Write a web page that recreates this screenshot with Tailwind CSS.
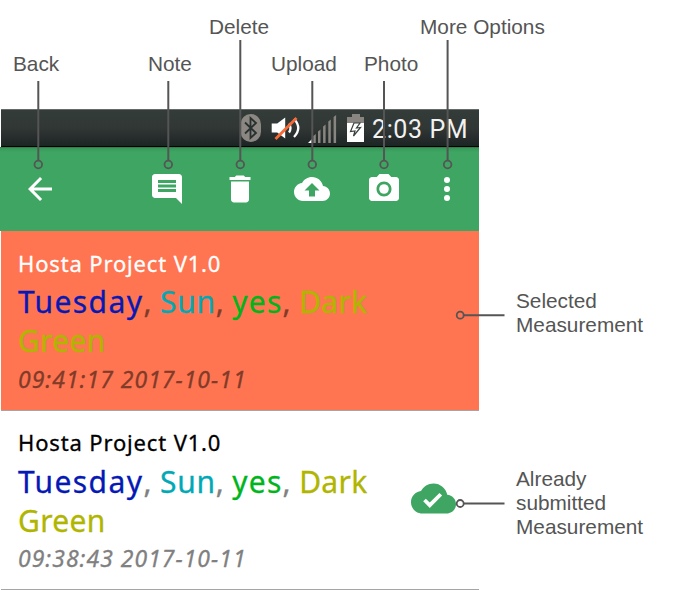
<!DOCTYPE html>
<html lang="en">
<head>
<meta charset="utf-8">
<title>Measurement list</title>
<script src="https://cdn.jsdelivr.net/npm/@tailwindcss/browser@4"></script>
</head>
<body class="bg-white">
<div class="relative h-[590px] w-[700px] overflow-hidden bg-white font-['Liberation_Sans',sans-serif] text-[20.8px] leading-[24px] text-[#555]">
  <div class="flex">
    <main class="w-[480px] shrink-0">
      <header class="h-[109px] pt-[15px] whitespace-nowrap">
        <div class="flex h-[37px]">
          <span class="ml-[209px] w-[211px] shrink-0">Delete</span>
          <span>More Options</span>
        </div>
        <div class="flex">
          <span class="ml-[13px] w-[135px]">Back</span>
          <span class="w-[123px]">Note</span>
          <span class="w-[93px]">Upload</span>
          <span>Photo</span>
        </div>
      </header>

      <div class="ml-px flex h-[38px] w-[478px] items-center border-t border-b border-t-[#666b68] border-b-black bg-linear-to-b from-[#343c39] via-[#303735] to-[#1d2424] pl-[239px]">
        <svg class="h-[28px] w-[22px] shrink-0" viewBox="0 0 22 28"><rect x=".5" width="20.5" height="28" rx="10.2" fill="#8b8782"/><path d="M5 8.500l11 10.500-5.500 5V4l5.500 5L5 19.500" fill="none" stroke="#293130" stroke-width="1.800"/></svg>
        <svg class="ml-[9px] h-[28px] w-[32px] shrink-0" viewBox="0 0 32 28"><path d="M.7 9.500h5.500l8-6v21l-8-6H.7z" fill="#fff"/><path d="M18 9.500q3 4.500 0 9M23 5q8.500 9 0 18" fill="none" stroke="#fff" stroke-width="2.300"/><path d="M4.500 25L25.500 4" stroke="#f66b35" stroke-width="2.800"/></svg>
        <svg class="ml-[5px] h-[30px] w-[30px] shrink-0" viewBox="0 0 30 30"><path d="M5.300 30v-7l2.500-2v9zM10 30V18.500l2.500-2V30zM15.100 30V13.500l2.500-2V30zM20.300 30V8.500l2.500-2V30zM25.600 30V4l2.500-2v28z" fill="#898581"/><path d="M0 30l5-5v5z" fill="#fff"/></svg>
        <svg class="ml-[9px] h-[28px] w-[18px] shrink-0" viewBox="0 0 18 28"><path d="M5 0h8v3h4v6H0V3h5z" fill="#898581"/><path d="M0 9h17v19H0z" fill="#fff"/><path d="M7 9l-3.500 8.500 4.500-.5-1.500 5 7-8.500-4 .5L13 9z" fill="#fff" stroke="#39403e" stroke-width="1.200"/></svg>
        <span class="ml-[7px] pt-[3px] font-['Roboto',sans-serif] text-[25px] leading-[35px] tracking-[0.6px] whitespace-nowrap text-[#f2f2f2]">2:03 PM</span>
      </div>

      <nav class="flex h-[84px] w-[479px] items-start border-t border-[#2f8049] bg-[#3ea662] bg-linear-to-b from-[#37965a] to-[#3ea662] to-5% pt-[23px] pl-[22px] text-white">
        <svg class="size-[36px]" viewBox="0 0 24 24" fill="currentColor"><path d="M20 11H7.830l5.590-5.590L12 4l-8 8 8 8 1.410-1.410L7.830 13H20v-2z"/></svg>
        <svg class="ml-[91px] size-[36px]" viewBox="0 0 24 24" fill="currentColor"><path d="M21.990 4c0-1.100-.890-2-1.990-2H4c-1.100 0-2 .9-2 2v12c0 1.100.9 2 2 2h14l4 4-.010-18zM18 14H6v-2h12v2zm0-3H6V9h12v2zm0-3H6V6h12v2z"/></svg>
        <svg class="ml-[36.500px] size-[36px]" viewBox="0 0 24 24" fill="currentColor"><path d="M6 19c0 1.100.9 2 2 2h8c1.100 0 2-.9 2-2V7H6v12zM19 4h-3.500l-1-1h-5l-1 1H5v2h14V4z"/></svg>
        <svg class="ml-[36px] size-[36px]" viewBox="0 0 24 24" fill="currentColor"><path d="M19.350 10.040C18.670 6.590 15.640 4 12 4 9.110 4 6.600 5.640 5.350 8.040 2.340 8.360 0 10.910 0 14c0 3.310 2.690 6 6 6h13c2.760 0 5-2.240 5-5 0-2.640-2.050-4.780-4.650-4.960zM14 13v4h-4v-4H7l5-5 5 5h-3z"/></svg>
        <svg class="ml-[36px] size-[36px]" viewBox="0 0 24 24" fill="currentColor"><circle cx="12" cy="12" r="3.200"/><path d="M9 2L7.170 4H4c-1.100 0-2 .9-2 2v12c0 1.100.9 2 2 2h16c1.100 0 2-.9 2-2V6c0-1.100-.9-2-2-2h-3.170L15 2H9zm3 15c-2.760 0-5-2.240-5-5s2.240-5 5-5 5 2.240 5 5-2.240 5-5 5z"/></svg>
        <svg class="ml-[27px] size-[36px]" viewBox="0 0 24 24" fill="currentColor"><circle cx="12" cy="6" r="2"/><circle cx="12" cy="12" r="2"/><circle cx="12" cy="18" r="2"/></svg>
      </nav>

      <article class="ml-px h-[180px] w-[478px] border-b border-[#a5a5a5] bg-[#ff7551] pt-[16px] pl-[17px] font-['Noto_Sans',sans-serif] text-[#803b29] [-webkit-text-stroke:0.3px]">
        <h2 class="h-[35px] text-[22px] leading-[32px] tracking-[0.85px] text-white">Hosta Project V1.0</h2>
        <p class="h-[79px] text-[30px] leading-[39px] tracking-[0.4px] whitespace-nowrap"><span class="tracking-[1.4px] text-[#0519b5]">Tuesday</span>, <span class="tracking-[0.7px] text-[#00a9b5]">Sun</span>, <span class="tracking-[1.2px] text-[#00b51c]">yes</span>, <span class="tracking-[0.3px] text-[#b0b500]">Dark<br>Green</span></p>
        <p class="text-[23px] leading-[36px] tracking-[1px] italic">09:41:17 2017-10-11</p>
      </article>

      <article class="ml-px flex h-[179px] w-[478px] border-b border-[#a5a5a5] bg-white pt-[15px] pl-[17px] font-['Noto_Sans',sans-serif] text-[#808080] [-webkit-text-stroke:0.3px]">
        <div class="w-[393px]">
          <h2 class="h-[36px] text-[22px] leading-[32px] tracking-[0.85px] text-black">Hosta Project V1.0</h2>
          <p class="h-[78px] text-[30px] leading-[39px] tracking-[0.4px] whitespace-nowrap"><span class="tracking-[1.4px] text-[#0519b5]">Tuesday</span>, <span class="tracking-[0.7px] text-[#00a9b5]">Sun</span>, <span class="tracking-[1.2px] text-[#00b51c]">yes</span>, <span class="tracking-[0.3px] text-[#b0b500]">Dark<br>Green</span></p>
          <p class="text-[23px] leading-[36px] tracking-[1px] italic">09:38:43 2017-10-11</p>
        </div>
        <svg class="mt-[50px] size-[45px] shrink-0" viewBox="0 0 24 24" fill="#3ea662"><path d="M19.350 10.040C18.670 6.590 15.640 4 12 4 9.110 4 6.600 5.640 5.350 8.040 2.340 8.360 0 10.910 0 14c0 3.310 2.690 6 6 6h13c2.760 0 5-2.240 5-5 0-2.640-2.050-4.780-4.650-4.960zM10 17l-3.500-3.500 1.410-1.410L10 14.170 15.180 9l1.410 1.410L10 17z"/></svg>
      </article>
    </main>

    <aside class="w-[184px] pt-[289px] pl-[36px]">
      <p class="h-[178px]">Selected<br>Measurement</p>
      <p>Already<br>submitted<br>Measurement</p>
    </aside>
  </div>

  <svg class="absolute inset-0 h-[590px] w-[700px]" viewBox="0 0 700 590" fill="none" stroke="#555" stroke-width="2">
    <path d="M38.300 81v79M168.300 81v79M240.300 40v120M312.300 81v79M384 81v79M447.600 40v120M464 315.200h40.500M464 503.500h40.500"/>
    <g stroke-width="1.800"><circle cx="38.300" cy="164.500" r="3.800"/><circle cx="168.300" cy="164.500" r="3.800"/><circle cx="240.300" cy="164.500" r="3.800"/><circle cx="312.300" cy="164.500" r="3.800"/><circle cx="384" cy="164.500" r="3.800"/><circle cx="447.600" cy="164.500" r="3.800"/><circle cx="460.200" cy="315.200" r="3.500"/><circle cx="460.200" cy="503.500" r="3.500" fill="#fff"/></g>
  </svg>
</div>
</body>
</html>
